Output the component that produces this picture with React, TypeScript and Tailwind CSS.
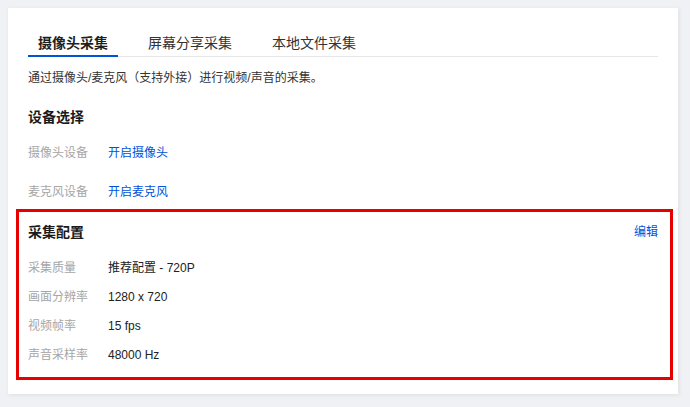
const font = { fontFamily: '"Liberation Sans", "Noto Sans CJK SC", sans-serif' };

const tabs = ["摄像头采集", "屏幕分享采集", "本地文件采集"];

const devices = [
  { label: "摄像头设备", action: "开启摄像头", mt: "mt-[16px]" },
  { label: "麦克风设备", action: "开启麦克风", mt: "mt-[19px]" },
];

const config = [
  { label: "采集质量", value: "推荐配置 - 720P" },
  { label: "画面分辨率", value: "1280 x 720" },
  { label: "视频帧率", value: "15 fps" },
  { label: "声音采样率", value: "48000 Hz" },
];

export default function App() {
  return (
    <div className="min-h-screen w-full bg-[#f0f1f5] p-[8px] pr-[12px]" style={font}>
      <div className="bg-white px-[20px] pt-[24px] pb-[14px] shadow-[1px_1px_4px_rgba(0,0,0,0.08)]">
        {/* Tabs */}
        <div className="flex gap-[20px] border-b border-[#e7e7e7]">
          {tabs.map((t, i) => (
            <div
              key={t}
              className={
                i === 0
                  ? "-mb-px border-b-2 border-[#0052d9] px-[10px] pb-[1px] text-[14px] leading-[22px] font-semibold text-[#1f1f1f]"
                  : "-mb-px border-b-2 border-transparent px-[10px] pb-[1px] text-[14px] leading-[22px] text-[#333]"
              }
            >
              {t}
            </div>
          ))}
        </div>

        <p className="mt-[11px] text-[12px] leading-[20px] text-[#333]">
          通过摄像头/麦克风（支持外接）进行视频/声音的采集。
        </p>

        {/* Device selection */}
        <h3 className="mt-[19px] text-[14px] leading-[20px] font-bold text-[#1a1a1a]">设备选择</h3>
        {devices.map((d) => (
          <div key={d.label} className={`${d.mt} flex text-[12px] leading-[20px]`}>
            <span className="w-[80px] text-[#a6a6a6]">{d.label}</span>
            <span className="text-[#0052d9]">{d.action}</span>
          </div>
        ))}

        {/* Capture config */}
        <div className="mt-[7px] -ml-[12px] -mr-[15px] border-[3px] border-[#e60000] pl-[9px] pr-[12px] pt-[10px] pb-[12px]">
          <div className="flex items-center justify-between">
            <h3 className="text-[14px] leading-[20px] font-bold text-[#1a1a1a]">采集配置</h3>
            <span className="text-[12px] leading-[20px] text-[#0052d9]">编辑</span>
          </div>
          <div className="mt-[16px] flex flex-col gap-[9px]">
            {config.map((c) => (
              <div key={c.label} className="flex text-[12px] leading-[20px]">
                <span className="w-[80px] text-[#a6a6a6]">{c.label}</span>
                <span className="text-[#222]">{c.value}</span>
              </div>
            ))}
          </div>
        </div>
      </div>
    </div>
  );
}
